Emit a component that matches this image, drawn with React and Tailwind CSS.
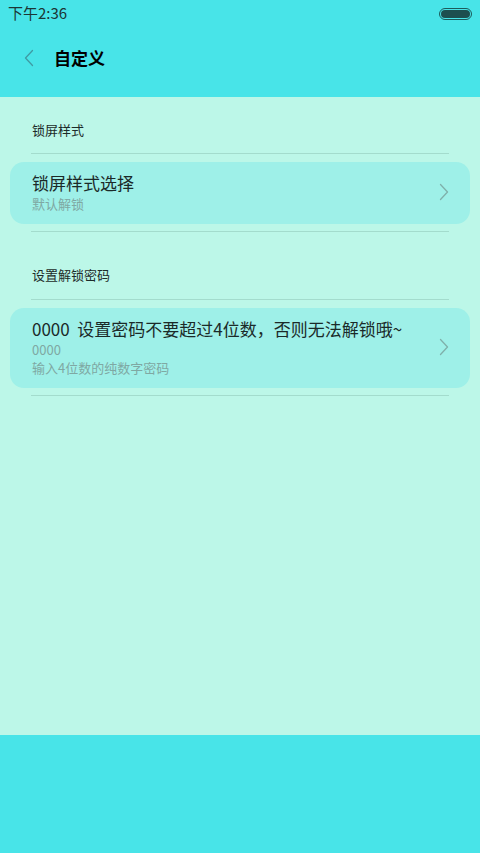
const font = { fontFamily: '"Noto Sans CJK SC", "Noto Sans", sans-serif' };

function Chevron({ className, left }) {
  return (
    <svg className={className} viewBox="0 0 10 18" fill="none" stroke="currentColor" strokeWidth="1.3" strokeLinecap="round" strokeLinejoin="round">
      <path d={left ? 'M8.5 1.5 L1.5 9 L8.5 16.5' : 'M1.5 1.5 L8.5 9 L1.5 16.5'} />
    </svg>
  );
}

function Section({ title, extra }) {
  return (
    <div className={`mx-[31px] flex items-center border-b border-[#a3dccd] pt-[9px] ${extra}`}>
      <span className="pl-px text-[13px] text-[#1d2b29]">{title}</span>
    </div>
  );
}

function Card({ title, lines }) {
  return (
    <div className="mx-[10px] mt-2 rounded-[14px] bg-[#9ef0e8] flex items-center pl-[22px] pr-[21px] pt-[9px] pb-[11px]">
      <div className="flex-1">
        <div className="text-[17px] leading-[24px] text-[#1b2a28] whitespace-pre">{title}</div>
        {lines.map((l) => (
          <div key={l} className="text-[13px] leading-[18px] text-[#7fa8a3]">{l}</div>
        ))}
      </div>
      <Chevron className="w-[10px] h-[18px] text-[#7fb0aa]" />
    </div>
  );
}

export default function App() {
  return (
    <div className="w-[480px] h-[853px] flex flex-col bg-[#bcf7e8]" style={font}>
      <div className="h-[97px] bg-[#48e4e8] flex flex-col">
        <div className="h-[27px] flex items-center justify-between px-2">
          <span className="text-[15px] text-[#1c3535]">下午2:36</span>
          <div className="w-[33px] h-[12px] rounded-full border border-[#1c5a5a] p-px">
            <div className="w-full h-full rounded-full bg-[#1d4f4f]" />
          </div>
        </div>
        <div className="flex-1 flex items-center pb-[9px]">
          <Chevron left className="ml-[24px] w-[10px] h-[18px] text-[#3f9aa3]" />
          <span className="ml-[20px] text-[17px] font-bold text-black">自定义</span>
        </div>
      </div>
      <div className="flex-1">
        <Section title="锁屏样式" extra="h-[57px]" />
        <Card title="锁屏样式选择" lines={['默认解锁']} />
        <div className="mx-[31px] mt-[7px] border-b border-[#a3dccd]" />
        <Section title="设置解锁密码" extra="h-[58px] mt-[10px]" />
        <Card title="0000  设置密码不要超过4位数，否则无法解锁哦~" lines={['0000', '输入4位数的纯数字密码']} />
        <div className="mx-[31px] mt-[7px] border-b border-[#a3dccd]" />
      </div>
      <div className="h-[118px] bg-[#48e4e8]" />
    </div>
  );
}
